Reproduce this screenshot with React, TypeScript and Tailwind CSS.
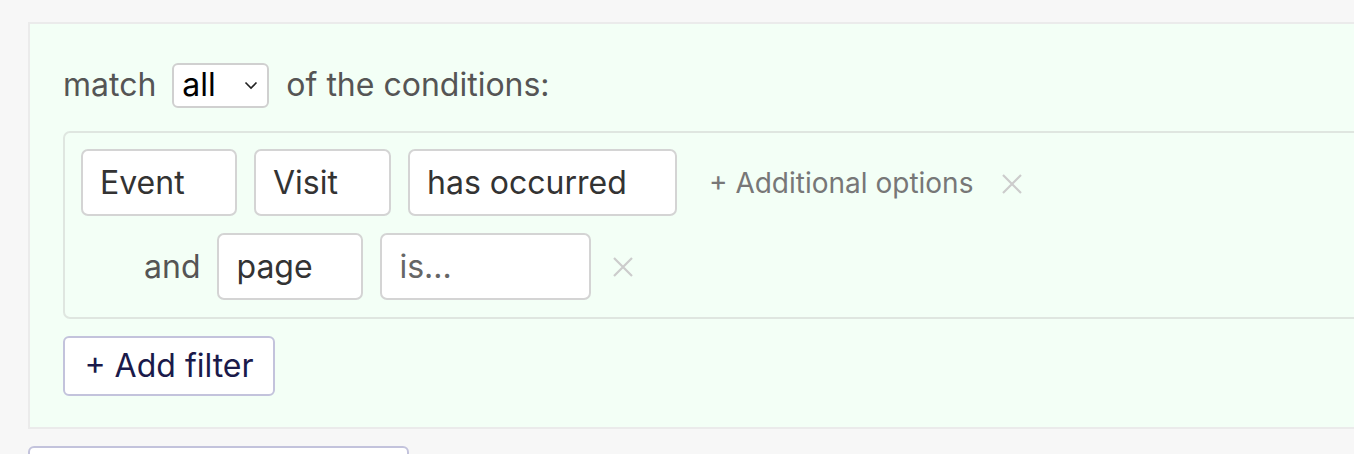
import React from 'react'

const font = { fontFamily: 'Inter, "Noto Sans", sans-serif' }

function Field({ label, width, muted }: { label: string; width: string; muted?: boolean }): JSX.Element {
    return (
        <div
            className={`flex items-center h-[67px] ${width} px-[17px] bg-white border-2 border-[#d4d4d4] rounded-[7px] text-[32px] whitespace-nowrap ${muted ? 'text-[#666]' : 'text-[#333]'}`}
        >
            {label}
        </div>
    )
}

function Remove(): JSX.Element {
    return (
        <svg width="22" height="22" viewBox="0 0 22 22" className="shrink-0">
            <path d="M2 2 L20 20 M20 2 L2 20" stroke="#cccccc" strokeWidth="2.2" />
        </svg>
    )
}

export default function App(): JSX.Element {
    return (
        <div style={font} className="w-[1354px] h-[454px] overflow-hidden bg-[#f7f7f7] pt-[22px] pl-[28px]">
            <div className="w-[1400px] bg-[#f3fff6] border-2 border-[#ebebeb] pt-[39px] pb-[31px] pl-[33px]">
                <div className="flex items-center h-[44px] text-[32px] text-[#555]">
                    <span>match</span>
                    <div className="flex items-center justify-between ml-[16px] w-[97px] h-[45px] pl-[8px] pr-[9px] bg-white border-2 border-[#d0d0d0] rounded-[6px] text-black">
                        <span>all</span>
                        <svg width="14" height="9" viewBox="0 0 14 9">
                            <path d="M1.5 1.5 L7 7 L12.5 1.5" stroke="#222" strokeWidth="1.6" fill="none" />
                        </svg>
                    </div>
                    <span className="ml-[17px]">of the conditions:</span>
                </div>

                <div className="mt-[24px] border-2 border-[#dfe6e0] rounded-[7px] pt-[16px] pb-[17px] pl-[16px]">
                    <div className="flex items-center gap-[17px]">
                        <Field label="Event" width="w-[156px]" />
                        <Field label="Visit" width="w-[137px]" />
                        <Field label="has occurred" width="w-[269px]" />
                        <span className="ml-[15px] text-[28px] text-[#777] whitespace-nowrap">+ Additional options</span>
                        <span className="ml-[11px] mt-[2px]"><Remove /></span>
                    </div>
                    <div className="flex items-center gap-[17px] mt-[17px] pl-[63px]">
                        <span className="text-[32px] text-[#555]">and</span>
                        <Field label="page" width="w-[146px]" />
                        <Field label="is..." width="w-[211px]" muted />
                        <span className="ml-[4px]"><Remove /></span>
                    </div>
                </div>

                <button className="mt-[17px] flex items-center justify-center h-[60px] w-[212px] bg-white border-2 border-[#c3c3dc] rounded-[6px] text-[32px] text-[#1a1a4a] whitespace-nowrap">
                    + Add filter
                </button>
            </div>
            <div className="mt-[17px] w-[381px] h-[40px] bg-white border-2 border-[#c3c3dc] rounded-[6px]" />
        </div>
    )
}
